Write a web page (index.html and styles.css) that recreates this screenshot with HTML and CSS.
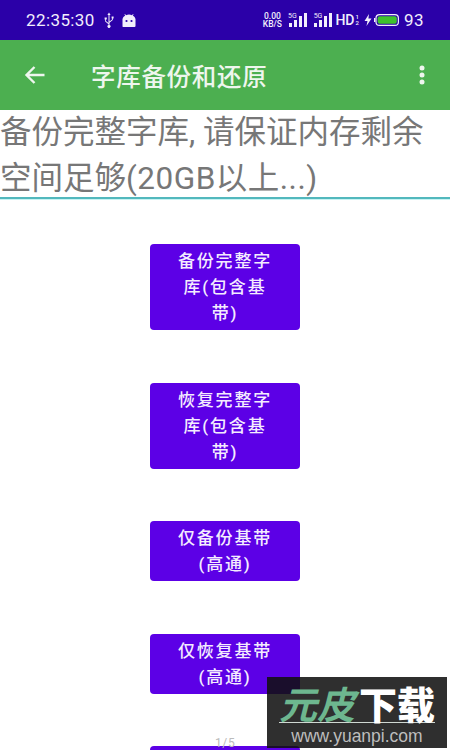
FILE: index.html
```
<!DOCTYPE html>
<html lang="zh">
<head>
<meta charset="utf-8">
<title>字库备份和还原</title>
<link rel="stylesheet" href="styles.css">
</head>
<body>
<div class="screen">
  <header class="status">
    <span class="clock">22:35:30</span>
    <svg class="usb" viewBox="0 0 10 16" width="10" height="16"><path d="M5 0.5 L3.4 3 H4.5 V11 L2 9 V7.5 H2.8 V5.6 H0.6 V7.5 H1.2 V9.5 L4.5 12.3 V13 A1.5 1.5 0 1 0 5.5 13 V10.8 L8.8 8 V6.5 H9.6 V4.6 L7.6 4.6 V6.5 H8 V7.6 L5.5 9.6 V3 H6.6 Z" fill="#f2eefc"/></svg>
    <svg class="bot" viewBox="0 0 14 13" width="14" height="13"><path d="M1 13 A1 1 0 0 1 0.5 12 V5 A6 5 0 0 1 3.2 1.6 L2.4 0.3 L3 0 L4 1.2 A6 5 0 0 1 10 1.2 L11 0 L11.6 0.3 L10.8 1.6 A6 5 0 0 1 13.5 5 V12 A1 1 0 0 1 12.5 13 Z" fill="#f2eefc"/><circle cx="4.5" cy="7" r="1.1" fill="#2b00a8"/><circle cx="9.5" cy="7" r="1.1" fill="#2b00a8"/></svg>
    <span class="spring"></span>
    <span class="speed"><span>0.00</span><span>KB/S</span></span>
    <span class="signal"><small>5G</small>
      <svg viewBox="0 0 18 14" width="18" height="14"><rect x="0" y="10" width="3" height="4"/><rect x="5" y="7" width="3" height="7"/><rect x="10" y="3" width="3" height="11"/><rect x="15" y="0" width="3" height="14"/></svg></span>
    <span class="signal"><small>5G</small>
      <svg viewBox="0 0 18 14" width="18" height="14"><rect x="0" y="10" width="3" height="4"/><rect x="5" y="7" width="3" height="7"/><rect x="10" y="3" width="3" height="11"/><rect x="15" y="0" width="3" height="14"/></svg></span>
    <span class="hd">HD<span class="hd-sub"><span>1</span><span>2</span></span></span>
    <svg class="bolt" viewBox="0 0 8 12" width="8" height="12"><path d="M5 0 L0.5 7 H3.5 L2.5 12 L7.5 4.6 H4.4 Z" fill="#f2eefc"/></svg>
    <svg class="battery" viewBox="0 0 25 12" width="25" height="12"><rect x="2" y="0.6" width="22.4" height="10.8" rx="3.5" fill="none" stroke="#f2eefc" stroke-width="1.2"/><rect x="3.6" y="2.2" width="19.2" height="7.6" rx="2" fill="#3fc22d"/><rect x="0" y="4" width="1.3" height="4" fill="#f2eefc"/></svg>
    <span class="level">93</span>
  </header>

  <nav class="appbar">
    <svg class="back" viewBox="0 0 22 20" width="22" height="20"><path d="M20.5 10 H2.5 M10.5 2 L2.5 10 L10.5 18" fill="none" stroke="#eef6ee" stroke-width="2.4"/></svg>
    <h1 class="title">字库备份和还原</h1>
    <svg class="more" viewBox="0 0 6 20" width="6" height="20"><circle cx="3" cy="3" r="2.5"/><circle cx="3" cy="10" r="2.5"/><circle cx="3" cy="17" r="2.5"/></svg>
  </nav>

  <main class="content">
    <p class="notice">备份完整字库, 请保证内存剩余空间足够<span class="latin">(20GB以上...)</span></p>
    <div class="actions">
      <button class="action">备份完整字库(包含基带)</button>
      <button class="action">恢复完整字库(包含基带)</button>
      <button class="action">仅备份基带(高通)</button>
      <button class="action">仅恢复基带(高通)</button>
      <button class="action">仅备份基带</button>
    </div>
  </main>

  <div class="pager">1/5</div>
  <aside class="mark">
    <div class="mark-name"><em>元皮</em><b>下载</b></div>
    <div class="mark-url">www.yuanpi.com</div>
  </aside>
</div>
</body>
</html>
```

FILE: styles.css
```
* { box-sizing: border-box; }
html, body { margin: 0; padding: 0; }
body { font-family: Roboto, "Noto Sans CJK SC", sans-serif; background: #fff; }
.screen { position: relative; width: 450px; height: 750px; overflow: hidden; background: #fff; }

.status { display: flex; align-items: center; height: 40px; padding: 0 26px 0 26px; background: #2b00a8; color: #f2eefc; }
.clock { font-size: 17px; letter-spacing: 0.4px; margin-right: 9px; }
.usb { margin-right: 8px; }
.spring { flex: 1; }
.speed { display: flex; flex-direction: column; font-size: 8.5px; line-height: 8px; font-weight: 500; margin-right: 6px; text-align: center; }
.signal { display: flex; align-items: flex-start; margin-right: 7px; }
.signal small { font-size: 7px; line-height: 7px; margin-right: -8px; }
.signal svg { fill: #f2eefc; }
.signal + .hd { margin-left: -4px; }
.hd { display: flex; align-items: center; font-size: 14px; font-weight: 500; margin-right: 5px; }
.hd-sub { display: flex; flex-direction: column; font-size: 6px; line-height: 6px; margin-left: 1px; }
.bolt { margin-right: 2px; }
.battery { margin-right: 5px; }
.level { font-size: 17px; letter-spacing: 0.5px; }

.appbar { display: flex; align-items: center; height: 70px; padding: 0 25px 0 24px; background: #4caf50; color: #eef6ee; }
.back { flex: none; }
.title { flex: 1; margin: 0 0 0 45px; font-size: 24.5px; font-weight: 500; font-family: "Noto Sans CJK SC", sans-serif; letter-spacing: 0.7px; }
.more { flex: none; fill: #eef6ee; }

.notice { margin: 0; height: 89px; font-size: 31.5px; line-height: 46px; color: #777; border-bottom: 2px solid #52b8bd; box-shadow: 0 1px 0 #c8f4f4; }
.latin { letter-spacing: 0.5px; }

.actions { display: flex; flex-direction: column; align-items: center; gap: 52.5px; padding-top: 45px; }
.action { flex: none; width: 150px; padding: 4px 22px; border: 0; border-radius: 4px; background: #5c00e6; color: #f4ecff; font-family: Roboto, "Noto Sans CJK SC", sans-serif; font-size: 17px; font-weight: 500; line-height: 26px; letter-spacing: 1.8px; text-align: center; }

.pager { position: absolute; left: 215px; top: 737px; font-size: 12px; line-height: 12px; letter-spacing: 0.6px; color: #bbb; }
.mark { position: absolute; left: 267px; top: 677px; width: 180px; height: 71px; background: rgba(16, 16, 16, 0.87); display: flex; flex-direction: column; align-items: center; padding-top: 6px; }
.mark-name { display: flex; justify-content: space-between; width: 156px; height: 40px; border-bottom: 1px solid #cfd8d2; font-family: "Noto Sans CJK SC", sans-serif; font-size: 38px; line-height: 40px; font-weight: 700; }
.mark-name em { color: #6db78f; font-style: italic; }
.mark-name b { color: #fff; font-weight: 900; }
.mark-url { margin-top: 2px; font-family: "Liberation Sans", sans-serif; font-size: 17.5px; line-height: 22px; color: #bdbdbd; }
```
